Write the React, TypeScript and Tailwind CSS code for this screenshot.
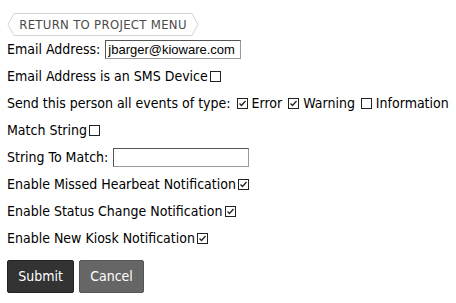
import React from 'react'

function Box({ checked }: { checked?: boolean }) {
  return (
    <svg width="11" height="11" viewBox="0 0 11 11" className="inline-block ml-[2px] align-[-1px]">
      <rect x="0.5" y="0.5" width="10" height="10" fill="white" stroke="#222" />
      {checked && <path d="M2.5 5.5 L4.5 7.5 L8.5 3" fill="none" stroke="#222" strokeWidth="1.3" />}
    </svg>
  )
}

export default function App() {
  const row = 'h-[27px] flex items-center whitespace-nowrap'
  return (
    <main className="min-h-screen bg-white text-[14px] text-black px-[7px] pt-[13px]" style={{ fontFamily: 'Tahoma, "DejaVu Sans Condensed", "Noto Sans", sans-serif' }}>
      <div className="relative h-[23px] w-[192px]">
        <svg width="192" height="23" viewBox="0 0 192 23" className="absolute inset-0">
          <path d="M7 0.5 H185 L191 11.5 L185 22.5 H7 L1 11.5 Z" fill="white" stroke="#d4d4d4" />
        </svg>
        <span className="relative flex h-full items-center justify-center text-[13px] tracking-[0.3px] text-[#4a4a4a]" style={{ fontFamily: '"DejaVu Sans Condensed", "Liberation Sans", sans-serif' }}>
          RETURN TO PROJECT MENU
        </span>
      </div>
      <div className={row}>
        Email Address:
        <input
          defaultValue="jbarger@kioware.com"
          className="ml-[5px] h-[19px] w-[136px] border border-[#999] border-t-[#555] border-l-[#555] px-[2px] text-[13px] outline-none"
          style={{ fontFamily: '"Liberation Sans", Arial, sans-serif' }}
        />
      </div>
      <div className={row}>
        Email Address is an SMS Device<Box />
      </div>
      <div className={row}>
        Send this person all events of type:&nbsp;<Box checked />&nbsp;Error&nbsp;<Box checked />&nbsp;Warning&nbsp;<Box />&nbsp;Information
      </div>
      <div className={row}>
        Match String<Box />
      </div>
      <div className={row}>
        String To Match:
        <input className="ml-[5px] h-[19px] w-[136px] border border-[#999] border-t-[#555] border-l-[#555] px-[2px] outline-none" />
      </div>
      <div className={row}>
        Enable Missed Hearbeat Notification<Box checked />
      </div>
      <div className={row}>
        Enable Status Change Notification<Box checked />
      </div>
      <div className={row}>
        Enable New Kiosk Notification<Box checked />
      </div>
      <div className="flex gap-[5px] mt-[8px]">
        <button className="h-[33px] w-[67px] rounded-[2px] bg-[#333] border border-[#222] text-white text-[14px]">Submit</button>
        <button className="h-[33px] w-[65px] rounded-[2px] bg-[#666] border border-[#555] text-white text-[14px]">Cancel</button>
      </div>
    </main>
  )
}
